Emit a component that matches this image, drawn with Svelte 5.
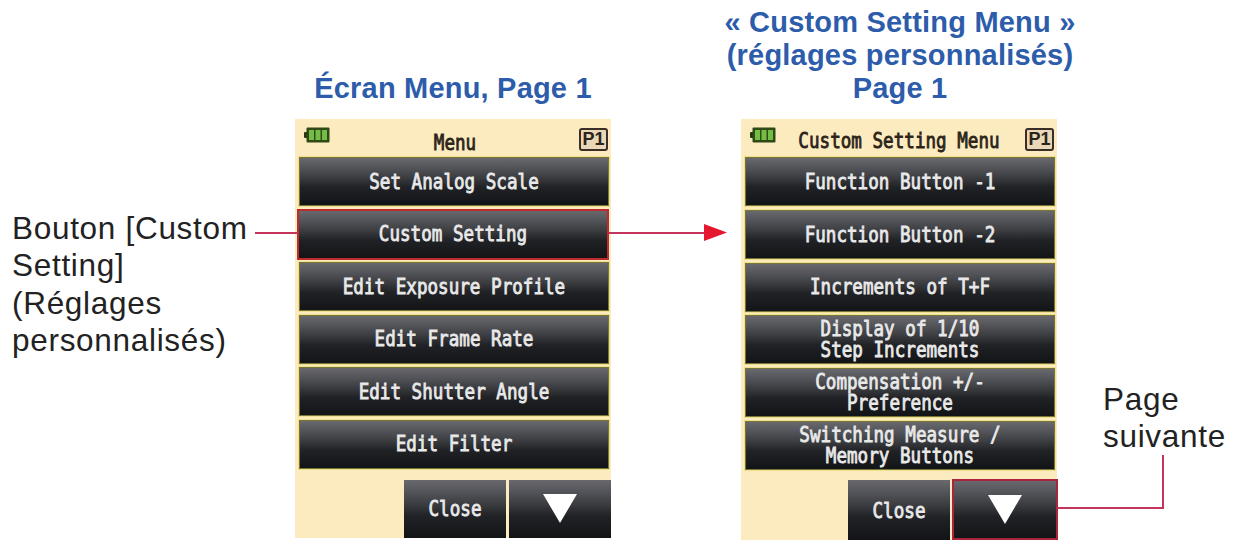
<script lang="ts">
  type Item = { lines: string[]; marked?: boolean };
  type Screen = { id: string; heading: string[]; title: string; items: Item[]; nextMarked: boolean };

  const screens: Screen[] = [
    {
      id: 'menu',
      heading: ['Écran Menu, Page 1'],
      title: 'Menu',
      items: [
        { lines: ['Set Analog Scale'] },
        { lines: ['Custom Setting'], marked: true },
        { lines: ['Edit Exposure Profile'] },
        { lines: ['Edit Frame Rate'] },
        { lines: ['Edit Shutter Angle'] },
        { lines: ['Edit Filter'] }
      ],
      nextMarked: false
    },
    {
      id: 'custom',
      heading: ['« Custom Setting Menu »', '(réglages personnalisés)', 'Page 1'],
      title: 'Custom Setting Menu',
      items: [
        { lines: ['Function Button -1'] },
        { lines: ['Function Button -2'] },
        { lines: ['Increments of T+F'] },
        { lines: ['Display of 1/10', 'Step Increments'] },
        { lines: ['Compensation +/-', 'Preference'] },
        { lines: ['Switching Measure /', 'Memory Buttons'] }
      ],
      nextMarked: true
    }
  ];
</script>

<main class="figure">
  <p class="note note-left">Bouton [Custom<br />Setting]<br />(Réglages<br />personnalisés)</p>

  {#each screens as screen}
    <section class="column {screen.id}">
      <h2>
        {#each screen.heading as line}
          <span>{line}</span>
        {/each}
      </h2>
      <div class="screen">
        <header>
          <svg class="battery" width="26" height="16" viewBox="0 0 26 16">
            <rect x="0" y="5" width="4" height="6" rx="1" fill="#26380f" />
            <rect x="2.500" y="0.500" width="23" height="15" rx="1" fill="#2f4a17" />
            <rect x="5" y="3" width="5" height="10" fill="#74bd45" />
            <rect x="11.500" y="3" width="5" height="10" fill="#74bd45" />
            <rect x="18" y="3" width="5" height="10" fill="#74bd45" />
          </svg>
          <span class="lcd title">{screen.title}</span>
          <span class="page">P1</span>
        </header>
        <div class="list">
          {#each screen.items as item}
            <button class:marked={item.marked}>
              <span class="lcd">
                {#each item.lines as line}
                  <span class="line">{line}</span>
                {/each}
              </span>
            </button>
          {/each}
        </div>
        <footer>
          <button class="close"><span class="lcd">Close</span></button>
          <button class="next" class:marked={screen.nextMarked} aria-label="Page suivante">
            <svg width="34" height="29" viewBox="0 0 34 29"><path d="M0 0H34L17 29Z" fill="#fff" /></svg>
          </button>
        </footer>
      </div>
    </section>
  {/each}

  <p class="note note-right">Page<br />suivante</p>

  <!-- callout lines -->
  <svg class="lines" width="1234" height="545" viewBox="0 0 1234 545">
    <g fill="none" stroke="#c5355b" stroke-width="2">
      <path d="M255 233H298" />
      <path d="M609 233H708" />
      <path d="M1057 508H1163V455" />
    </g>
    <path d="M704 224L727 232.500L704 241Z" fill="#e5172f" />
  </svg>
</main>

<style>
  :global(body) {
    background: #fff;
  }

  .figure {
    position: relative;
    display: flex;
    width: 1234px;
    height: 545px;
    overflow: hidden;
    font-family: 'Liberation Sans', Arial, sans-serif;
  }

  .note {
    flex: none;
    box-sizing: border-box;
    margin: 0;
    color: #222;
    font-size: 31.5px;
    line-height: 37.3px;
    letter-spacing: 0.7px;
    white-space: nowrap;
  }

  .note-left {
    width: 295px;
    padding: 210px 0 0 12px;
  }

  .note-right {
    padding: 381px 0 0 46px;
  }

  .column {
    flex: none;
    width: 316px;
    display: flex;
    flex-direction: column;
  }

  .custom {
    margin-left: 130px;
  }

  h2 {
    height: 119px;
    margin: 0;
    padding-bottom: 14px;
    box-sizing: border-box;
    display: flex;
    flex-direction: column;
    justify-content: flex-end;
    align-items: center;
    color: #2c5caa;
    font-size: 29px;
    line-height: 33px;
    letter-spacing: 0.2px;
    white-space: nowrap;
  }

  .custom h2 {
    padding-left: 2px;
  }

  .screen {
    height: 419px;
    box-sizing: border-box;
    padding-left: 4px;
    display: flex;
    flex-direction: column;
    background: #fdebc0;
  }

  .custom .screen {
    height: 421px;
  }

  header {
    flex: none;
    height: 38px;
    display: grid;
    grid-template-columns: 32px 1fr 32px;
    align-items: center;
  }

  .battery {
    margin: -6px 0 0 5px;
  }

  .title {
    justify-self: center;
    color: #2b2419;
    padding-top: 9px;
  }

  .custom .title {
    margin-left: -4px;
    padding-top: 6px;
  }

  .page {
    width: 29px;
    height: 23px;
    margin: 3px 0 0 0;
    box-sizing: border-box;
    border: 2px solid #3a2f26;
    border-radius: 3px;
    background: #ead7b8;
    color: #2b2419;
    font-size: 18px;
    font-weight: bold;
    line-height: 19px;
    text-align: center;
  }

  .lcd {
    font-family: 'DejaVu Sans Mono', monospace;
    font-size: 17.6px;
    line-height: 17.4px;
    white-space: nowrap;
    -webkit-text-stroke: 0.7px currentColor;
    transform: scaleY(1.2);
  }

  .line {
    display: block;
  }

  .list {
    width: 310px;
    display: grid;
    grid-template-rows: repeat(6, 49px);
    row-gap: 3.5px;
  }

  .custom .list {
    row-gap: 3.8px;
  }

  button {
    margin: 0;
    padding: 0;
    display: flex;
    align-items: center;
    justify-content: center;
    border: 1px solid #77753a;
    border-radius: 0;
    outline: 1px solid #efe08c;
    background: linear-gradient(#68686d 0%, #56575c 18%, #3a3c40 42%, #202226 62%, #131416 100%);
    color: #e9e9e9;
  }

  .list button {
    padding-top: 2px;
  }

  .list .marked {
    margin: -1px 0 -1px -2px;
    border: 2px solid #bd2b2c;
    outline: none;
  }

  footer {
    margin-top: 11px;
    height: 58px;
    display: flex;
    justify-content: flex-end;
    gap: 3px;
  }

  footer button {
    width: 102px;
    border: none;
    outline: none;
  }

  .custom footer {
    height: 60px;
    margin-top: 10px;
  }

  .close {
    padding-top: 3px;
  }

  .custom .next {
    width: 106px;
    margin: -1px -1px 0 -1px;
    border: 2px solid #a9243c;
  }

  .lines {
    position: absolute;
    top: 0;
    left: 0;
    pointer-events: none;
  }
</style>
